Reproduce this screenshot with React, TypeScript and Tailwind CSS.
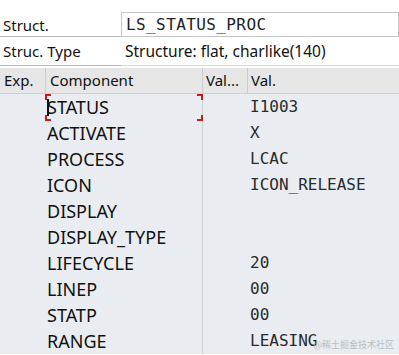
import React from "react";

const rows: [string, string][] = [
  ["STATUS", "I1003"],
  ["ACTIVATE", "X"],
  ["PROCESS", "LCAC"],
  ["ICON", "ICON_RELEASE"],
  ["DISPLAY", ""],
  ["DISPLAY_TYPE", ""],
  ["LIFECYCLE", "20"],
  ["LINEP", "00"],
  ["STATP", "00"],
  ["RANGE", "LEASING"],
];

const sans = { fontFamily: '"Noto Sans", "Open Sans", sans-serif' };
const mono = { fontFamily: '"DejaVu Sans Mono", monospace' };

export default function App() {
  return (
    <div className="w-[399px] h-[355px] bg-white overflow-hidden relative text-[15px] text-[#111]" style={sans}>
      <div className="h-[12px]" />
      <div className="flex h-[25px]">
        <div className="w-[121px] border-b border-[#b8b8b8] pl-[3px] leading-[27px]">Struct.</div>
        <div className="flex-1 border border-[#c4c4c4] pl-[4px] leading-[23px] text-[16px] text-[#222] tracking-[0.4px]" style={mono}>
          LS_STATUS_PROC
        </div>
      </div>
      <div className="flex h-[29px]">
        <div className="w-[121px] border-b border-[#b8b8b8] pl-[3px] leading-[28px]">Struc. Type</div>
        <div className="flex-1 border-b border-[#d8d8d8] pl-[4px] leading-[28px] text-[15.5px]">Structure: flat, charlike(140)</div>
      </div>
      <div className="h-[2px]" />
      <div className="flex h-[26px] bg-[#e6e6e6] border-b border-[#cfcfcf] leading-[25px]">
        <div className="w-[46px] pl-[4px] border-r border-[#cccccc]">Exp.</div>
        <div className="w-[157px] pl-[4px] border-r border-[#cccccc]">Component</div>
        <div className="w-[45px] pl-[3px] border-r border-[#cccccc] whitespace-nowrap overflow-hidden">Val...</div>
        <div className="flex-1 pl-[3px]">Val.</div>
      </div>
      <div className="bg-[#e9edf1] relative">
        {rows.map(([c, v]) => (
          <div key={c} className="flex h-[26px] leading-[26px]">
            <div className="w-[46px]" />
            <div className="w-[157px] pl-[1px] border-r border-[#cdd1d5] text-[18px] whitespace-nowrap">{c}</div>
            <div className="w-[45px]" />
            <div className="flex-1 pl-[2px] text-[#2a2a2a] text-[16px]" style={mono}>{v}</div>
          </div>
        ))}
        <div className="absolute left-[45px] top-[0px] w-[158px] h-[27px] pointer-events-none">
          <div className="absolute left-0 top-0 w-[6px] h-[6px] border-l-2 border-t-2 border-[#cc1a1a]" />
          <div className="absolute right-0 top-0 w-[6px] h-[6px] border-r-2 border-t-2 border-[#cc1a1a]" />
          <div className="absolute left-0 bottom-0 w-[6px] h-[6px] border-l-2 border-b-2 border-[#cc1a1a]" />
          <div className="absolute right-0 bottom-0 w-[6px] h-[6px] border-r-2 border-b-2 border-[#cc1a1a]" />
          <div className="absolute left-[2px] top-[5px] w-[2px] h-[17px] bg-[#111]" />
        </div>
      </div>
      <div className="absolute right-[5px] bottom-[4px] text-[9px] text-[#bdbdbd]" style={{ fontFamily: '"Noto Sans CJK SC", sans-serif' }}>
        @稀土掘金技术社区
      </div>
    </div>
  );
}
